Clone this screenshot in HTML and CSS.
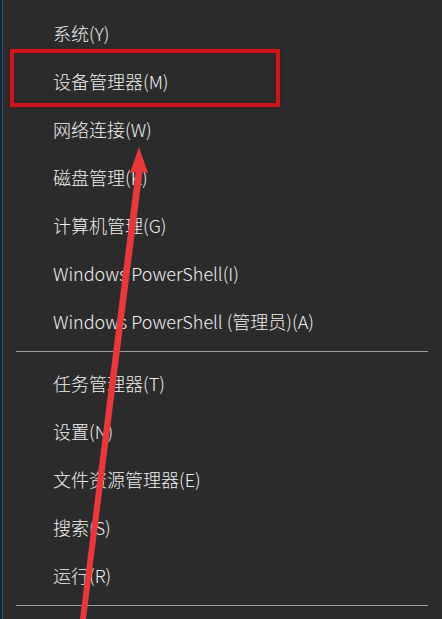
FILE: index.html
```html
<!DOCTYPE html>
<html lang="zh-CN">
  <head>
    <meta charset="UTF-8" />
    <meta name="viewport" content="width=device-width, initial-scale=1.0" />
    <title>快速链接菜单</title>
    <link rel="stylesheet" href="styles.css">
  </head>
  <body>
    <div class="menu">
      <ul class="group">
        <li class="item">系统(Y)</li>
        <li class="item">设备管理器(M)</li>
        <li class="item">网络连接(W)</li>
        <li class="item">磁盘管理(K)</li>
        <li class="item">计算机管理(G)</li>
        <li class="item">Windows PowerShell(I)</li>
        <li class="item">Windows PowerShell (管理员)(A)</li>
      </ul>
      <hr class="sep" />
      <ul class="group">
        <li class="item">任务管理器(T)</li>
        <li class="item">设置(N)</li>
        <li class="item">文件资源管理器(E)</li>
        <li class="item">搜索(S)</li>
        <li class="item">运行(R)</li>
      </ul>
      <hr class="sep" />

      <!-- annotation: red frame + arrow -->
      <div class="mark"></div>
      <svg class="arrow" width="442" height="619" viewBox="0 0 442 619">
        <polygon
          fill="#e8383c"
          points="139,147 148,173 142.5,172 86,619 80,619 135.5,172 130,173"
        />
      </svg>
    </div>
  </body>
</html>
```

FILE: styles.css
```css
html,
body {
  margin: 0;
  padding: 0;
}
body {
  background-color: #2b2b2b;
  font-family: "Noto Sans CJK SC", "Noto Sans", sans-serif;
  height: 619px;
  overflow: hidden;
}
.menu {
  position: relative;
  height: 619px;
  padding-top: 9px;
  box-sizing: border-box;
  border-left: 2px solid #14253b;
  box-shadow: inset 1px 0 0 #3b4b5d;
}
.group {
  list-style: none;
  margin: 0;
  padding: 0;
}
.item {
  height: 48px;
  display: flex;
  align-items: center;
  padding-left: 51px;
  color: #f0f0f0;
  font-size: 18px;
  font-weight: 300;
}
.sep {
  border: none;
  height: 1px;
  background-color: #9c9c9c;
  margin: 6px 14px 7px 14px;
}
.mark {
  position: absolute;
  left: 8px;
  top: 49px;
  width: 262px;
  height: 50px;
  border: 4px solid #cc151d;
  box-shadow: 0 0 2px #5e0a0e, inset 0 0 2px #5e0a0e;
}
.arrow {
  position: absolute;
  left: -2px;
  top: 0;
}
```
